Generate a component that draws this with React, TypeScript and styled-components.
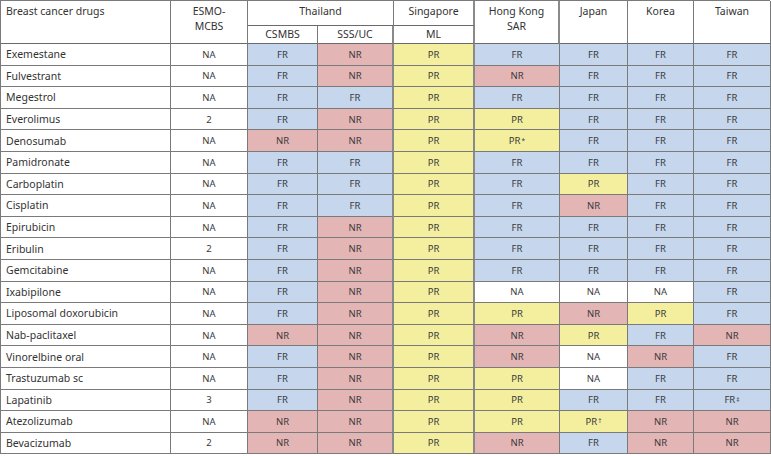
import React from "react";
import styled, { createGlobalStyle } from "styled-components";

type Status = "FR" | "NR" | "PR" | "NA";

interface DrugRow {
	name: string;
	esmo: string;
	cells: string[];
}

const rows: DrugRow[] = [
	{ name: "Exemestane", esmo: "NA", cells: ["FR", "NR", "PR", "FR", "FR", "FR", "FR"] },
	{ name: "Fulvestrant", esmo: "NA", cells: ["FR", "NR", "PR", "NR", "FR", "FR", "FR"] },
	{ name: "Megestrol", esmo: "NA", cells: ["FR", "FR", "PR", "FR", "FR", "FR", "FR"] },
	{ name: "Everolimus", esmo: "2", cells: ["FR", "NR", "PR", "PR", "FR", "FR", "FR"] },
	{ name: "Denosumab", esmo: "NA", cells: ["NR", "NR", "PR", "PR*", "FR", "FR", "FR"] },
	{ name: "Pamidronate", esmo: "NA", cells: ["FR", "FR", "PR", "FR", "FR", "FR", "FR"] },
	{ name: "Carboplatin", esmo: "NA", cells: ["FR", "FR", "PR", "FR", "PR", "FR", "FR"] },
	{ name: "Cisplatin", esmo: "NA", cells: ["FR", "FR", "PR", "FR", "NR", "FR", "FR"] },
	{ name: "Epirubicin", esmo: "NA", cells: ["FR", "NR", "PR", "FR", "FR", "FR", "FR"] },
	{ name: "Eribulin", esmo: "2", cells: ["FR", "NR", "PR", "FR", "FR", "FR", "FR"] },
	{ name: "Gemcitabine", esmo: "NA", cells: ["FR", "NR", "PR", "FR", "FR", "FR", "FR"] },
	{ name: "Ixabipilone", esmo: "NA", cells: ["FR", "NR", "PR", "NA", "NA", "NA", "FR"] },
	{ name: "Liposomal doxorubicin", esmo: "NA", cells: ["FR", "NR", "PR", "PR", "NR", "PR", "FR"] },
	{ name: "Nab-paclitaxel", esmo: "NA", cells: ["NR", "NR", "PR", "NR", "PR", "FR", "NR"] },
	{ name: "Vinorelbine oral", esmo: "NA", cells: ["FR", "NR", "PR", "NR", "NA", "NR", "FR"] },
	{ name: "Trastuzumab sc", esmo: "NA", cells: ["FR", "NR", "PR", "PR", "NA", "FR", "FR"] },
	{ name: "Lapatinib", esmo: "3", cells: ["FR", "NR", "PR", "PR", "FR", "FR", "FR‡"] },
	{ name: "Atezolizumab", esmo: "NA", cells: ["NR", "NR", "PR", "PR", "PR†", "NR", "NR"] },
	{ name: "Bevacizumab", esmo: "2", cells: ["NR", "NR", "PR", "NR", "FR", "NR", "NR"] },
];

const statusColors: Record<Status, string> = {
	FR: "#c5d6ed",
	NR: "#e3b5b5",
	PR: "#f3ef9f",
	NA: "#ffffff",
};

// columns after which the rule is drawn thicker
const thickAfter = [3, 4];

const GlobalStyle = createGlobalStyle`
	body {
		margin: 0;
		background: #ffffff;
		font-family: "Noto Sans", "Open Sans", sans-serif;
	}
`;

const App: React.FC = () => {
	return (
		<>
			<GlobalStyle />
			<Grid>
				<HeadCell $col="1" $row="1 / span 2" $align="left">
					Breast cancer drugs
				</HeadCell>
				<HeadCell $col="2" $row="1 / span 2">
					ESMO-
					<br />
					MCBS
				</HeadCell>
				<HeadCell $col="3 / span 2" $row="1">
					Thailand
				</HeadCell>
				<HeadCell $col="5" $row="1" $thick>
					Singapore
				</HeadCell>
				<HeadCell $col="6" $row="1 / span 2" $thick>
					Hong Kong
					<br />
					SAR
				</HeadCell>
				<HeadCell $col="7" $row="1 / span 2">
					Japan
				</HeadCell>
				<HeadCell $col="8" $row="1 / span 2">
					Korea
				</HeadCell>
				<HeadCell $col="9" $row="1 / span 2">
					Taiwan
				</HeadCell>
				<HeadCell $col="3" $row="2" $sub>
					CSMBS
				</HeadCell>
				<HeadCell $col="4" $row="2" $sub $thick>
					SSS/UC
				</HeadCell>
				<HeadCell $col="5" $row="2" $sub $thick>
					ML
				</HeadCell>

				{rows.map((row) => (
					<React.Fragment key={row.name}>
						<NameCell>{row.name}</NameCell>
						<ValueCell $bg="#ffffff">{row.esmo}</ValueCell>
						{row.cells.map((value, i) => {
							const base = value.slice(0, 2) as Status;
							const mark = value.slice(2);
							return (
								<ValueCell
									key={i}
									$bg={statusColors[base]}
									$thick={thickAfter.includes(i + 2)}
								>
									{base}
									{mark && <Mark>{mark}</Mark>}
								</ValueCell>
							);
						})}
					</React.Fragment>
				))}
			</Grid>
		</>
	);
};

export default App;

const Grid = styled.div`
	display: grid;
	width: 770px;
	grid-template-columns: 170px 77px 70px 76px 81px 85px 68px 66px 77px;
	grid-template-rows: 25px 18px repeat(19, 21.6px);
	border-top: 1px solid #7a7a7a;
	border-left: 1px solid #7a7a7a;
	box-sizing: border-box;
	color: #333333;
`;

const HeadCell = styled.div<{
	$col: string;
	$row: string;
	$align?: "left" | "center";
	$thick?: boolean;
	$sub?: boolean;
}>`
	grid-column: ${({ $col }) => $col};
	grid-row: ${({ $row }) => $row};
	display: flex;
	flex-direction: column;
	align-items: ${({ $align }) => ($align === "left" ? "flex-start" : "center")};
	justify-content: flex-start;
	padding: ${({ $sub }) => ($sub ? "1px 5px 0" : "3px 5px 0")};
	border-right: ${({ $thick }) => ($thick ? "2px solid #8a8a8a" : "1px solid #7a7a7a")};
	border-bottom: 1px solid #6a6a6a;
	font-size: 10.5px;
	line-height: 15px;
	text-align: ${({ $align }) => $align ?? "center"};
	box-sizing: border-box;
	overflow: hidden;
`;

const NameCell = styled.div`
	display: flex;
	align-items: center;
	padding: 0 5px;
	border-right: 1px solid #7a7a7a;
	border-bottom: 1px solid #7a7a7a;
	font-size: 10.5px;
	color: #333333;
	box-sizing: border-box;
	white-space: nowrap;
`;

const ValueCell = styled.div<{ $bg: string; $thick?: boolean }>`
	display: flex;
	align-items: center;
	justify-content: center;
	background: ${({ $bg }) => $bg};
	border-right: ${({ $thick }) => ($thick ? "2px solid #8a8a8a" : "1px solid #7a7a7a")};
	border-bottom: 1px solid #7a7a7a;
	font-size: 9.5px;
	color: #3a3a3a;
	box-sizing: border-box;
`;

const Mark = styled.sup`
	font-size: 6.5px;
	line-height: 0;
	vertical-align: 3px;
	margin-left: 1px;
`;
